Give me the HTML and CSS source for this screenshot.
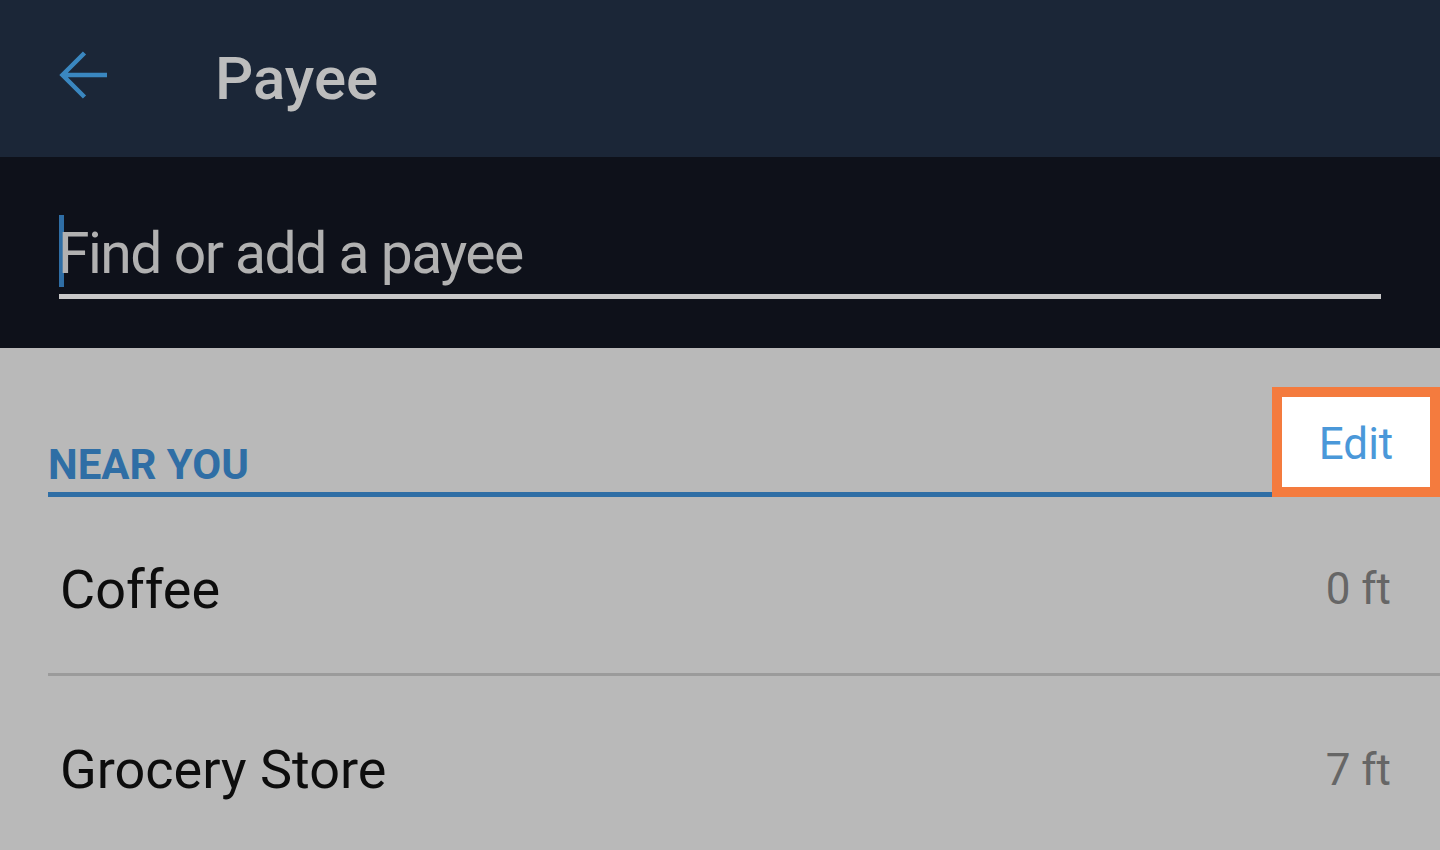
FILE: index.html
```html
<!DOCTYPE html>
<html lang="en">
<head>
<meta charset="utf-8">
<title>Payee</title>
<link rel="stylesheet" href="styles.css">
</head>
<body>
<header class="appbar">
  <svg class="back" viewBox="0 0 50 50" width="50" height="50" aria-hidden="true">
    <path d="M49 25 H4 M26.5 3 L4.5 25 L26.5 47" fill="none" stroke="#3a87c0" stroke-width="4.5"/>
  </svg>
  <h1 class="title">Payee</h1>
</header>
<div class="search">
  <div class="field">
    <span class="cursor"></span>
    <span class="placeholder">Find or add a payee</span>
  </div>
</div>
<main class="content">
  <div class="near-head">
    <div class="near-title"><span>NEAR YOU</span></div>
    <div class="edit">Edit</div>
  </div>
  <ul class="list">
    <li class="row"><span class="name">Coffee</span><span class="dist">0 ft</span></li>
    <li class="row"><span class="name">Grocery Store</span><span class="dist">7 ft</span></li>
  </ul>
</main>
</body>
</html>
```
FILE: styles.css
```css
html, body {
  margin: 0;
  padding: 0;
}
body {
  width: 1440px;
  height: 850px;
  overflow: hidden;
  background: #b9b9b9;
  font-family: Roboto, "Liberation Sans", sans-serif;
}
.appbar {
  height: 157px;
  background: #1b2637;
  display: flex;
  align-items: center;
  padding-left: 58px;
  box-sizing: border-box;
}
.back {
  display: block;
  margin-top: -7px;
}
.title {
  margin: 0 0 0 107px;
  font-size: 60px;
  font-weight: 500;
  color: #bdbdbd;
  line-height: 1;
}
.search {
  height: 191px;
  background: #0e111a;
  padding: 58px 59px 0;
  box-sizing: border-box;
}
.field {
  display: flex;
  align-items: flex-start;
  height: 79px;
  border-bottom: 5px solid #c8c8c8;
}
.cursor {
  width: 5px;
  height: 72px;
  background: #2f6ea5;
  margin-right: -6px;
}
.placeholder {
  font-size: 57px;
  line-height: 72px;
  padding-top: 3px;
  letter-spacing: -1.5px;
  color: #b1b1b1;
}
.content {
  display: block;
}
.near-head {
  display: flex;
  margin-top: 39px;
  padding-left: 48px;
}
.near-title {
  flex: 1;
  height: 110px;
  box-sizing: border-box;
  border-bottom: 5px solid #2f6ea5;
  display: flex;
  align-items: flex-end;
  padding-bottom: 6px;
}
.near-title span {
  font-size: 42px;
  font-weight: 700;
  line-height: 42px;
  color: #2f6ea5;
}
.edit {
  width: 148px;
  height: 87px;
  padding-top: 3px;
  border: 10px solid #f47b3e;
  background: #ffffff;
  display: flex;
  align-items: center;
  justify-content: center;
  font-size: 44px;
  color: #4a98d9;
}
.list {
  list-style: none;
  margin: 0 0 0 48px;
  padding: 0;
}
.row {
  height: 179px;
  box-sizing: border-box;
  padding: 8px 49px 0 12px;
  display: flex;
  align-items: center;
  justify-content: space-between;
  border-bottom: 3px solid #9b9b9b;
}
.row:last-child {
  border-bottom: none;
}
.name {
  font-size: 54px;
  color: #0d0d0d;
}
.dist {
  font-size: 44px;
  color: #666666;
}
```
